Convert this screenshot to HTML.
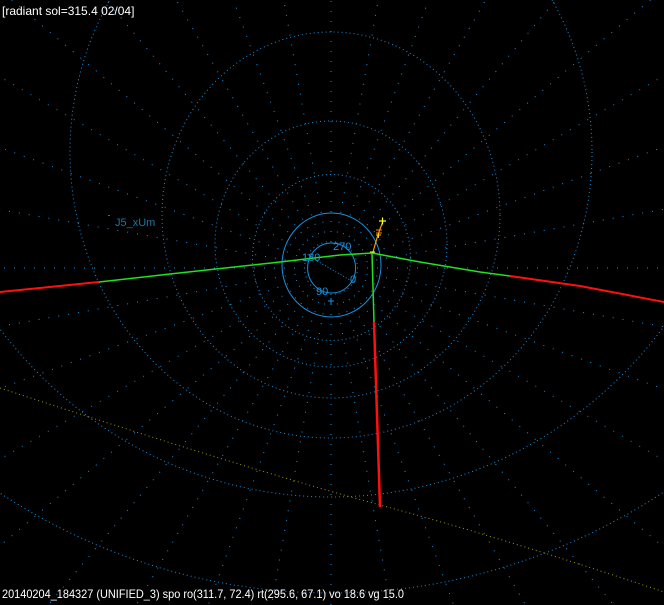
<!DOCTYPE html>
<html><head><meta charset="utf-8"><style>
html,body{margin:0;padding:0;background:#000;width:664px;height:605px;overflow:hidden}
svg{display:block;position:absolute;left:0;top:0}
</style></head><body>
<svg width="664" height="605" viewBox="0 0 664 605" xmlns="http://www.w3.org/2000/svg">
<rect width="664" height="605" fill="#000"/>
<g fill="none" stroke="#1a90e0" stroke-width="1">
<ellipse cx="331.6" cy="268" rx="24" ry="25"/>
<ellipse cx="331.5" cy="265" rx="49.5" ry="52"/>
</g>
<g fill="none" stroke="#1a90e0" stroke-width="1" stroke-dasharray="1 3">
<ellipse cx="331.5" cy="257.5" rx="79" ry="83"/>
<ellipse cx="331" cy="244" rx="116" ry="123"/>
<ellipse cx="331" cy="215" rx="169" ry="183"/>
<ellipse cx="331" cy="152" rx="261" ry="286"/>
<ellipse cx="331" cy="60" rx="420" ry="437"/>
<ellipse cx="331" cy="-100" rx="640" ry="693"/>
</g>
<g transform="translate(331,268)" stroke="#1a90e0" stroke-width="1" stroke-dasharray="1 9">
<line x1="26" y1="0" x2="700" y2="0" transform="rotate(0)"/>
<line x1="26" y1="0" x2="700" y2="0" transform="rotate(10)"/>
<line x1="26" y1="0" x2="700" y2="0" transform="rotate(20)"/>
<line x1="26" y1="0" x2="700" y2="0" transform="rotate(30)"/>
<line x1="26" y1="0" x2="700" y2="0" transform="rotate(40)"/>
<line x1="26" y1="0" x2="700" y2="0" transform="rotate(50)"/>
<line x1="26" y1="0" x2="700" y2="0" transform="rotate(60)"/>
<line x1="26" y1="0" x2="700" y2="0" transform="rotate(70)"/>
<line x1="26" y1="0" x2="700" y2="0" transform="rotate(80)"/>
<line x1="26" y1="0" x2="700" y2="0" transform="rotate(90)"/>
<line x1="26" y1="0" x2="700" y2="0" transform="rotate(100)"/>
<line x1="26" y1="0" x2="700" y2="0" transform="rotate(110)"/>
<line x1="26" y1="0" x2="700" y2="0" transform="rotate(120)"/>
<line x1="26" y1="0" x2="700" y2="0" transform="rotate(130)"/>
<line x1="26" y1="0" x2="700" y2="0" transform="rotate(140)"/>
<line x1="26" y1="0" x2="700" y2="0" transform="rotate(150)"/>
<line x1="26" y1="0" x2="700" y2="0" transform="rotate(160)"/>
<line x1="26" y1="0" x2="700" y2="0" transform="rotate(170)"/>
<line x1="26" y1="0" x2="700" y2="0" transform="rotate(180)"/>
<line x1="26" y1="0" x2="700" y2="0" transform="rotate(190)"/>
<line x1="26" y1="0" x2="700" y2="0" transform="rotate(200)"/>
<line x1="26" y1="0" x2="700" y2="0" transform="rotate(210)"/>
<line x1="26" y1="0" x2="700" y2="0" transform="rotate(220)"/>
<line x1="26" y1="0" x2="700" y2="0" transform="rotate(230)"/>
<line x1="26" y1="0" x2="700" y2="0" transform="rotate(240)"/>
<line x1="26" y1="0" x2="700" y2="0" transform="rotate(250)"/>
<line x1="26" y1="0" x2="700" y2="0" transform="rotate(260)"/>
<line x1="26" y1="0" x2="700" y2="0" transform="rotate(270)"/>
<line x1="26" y1="0" x2="700" y2="0" transform="rotate(280)"/>
<line x1="26" y1="0" x2="700" y2="0" transform="rotate(290)"/>
<line x1="26" y1="0" x2="700" y2="0" transform="rotate(300)"/>
<line x1="26" y1="0" x2="700" y2="0" transform="rotate(310)"/>
<line x1="26" y1="0" x2="700" y2="0" transform="rotate(320)"/>
<line x1="26" y1="0" x2="700" y2="0" transform="rotate(330)"/>
<line x1="26" y1="0" x2="700" y2="0" transform="rotate(340)"/>
<line x1="26" y1="0" x2="700" y2="0" transform="rotate(350)"/>
</g>
<line x1="312" y1="258" x2="350" y2="280" stroke="#1a90e0" stroke-dasharray="1 2"/>
<path d="M0,388 Q250,470 380,505 T664,592" fill="none" stroke="#9a9a00" stroke-width="1" stroke-dasharray="1 3"/>
<polyline points="0,292 99,282" fill="none" stroke="#ff1010" stroke-width="2"/>
<polyline points="99,282 170,274 280,262 340,255 372,253 420,262 480,272 510,276" fill="none" stroke="#20e020" stroke-width="1.5"/>
<polyline points="510,276 580,286 664,302" fill="none" stroke="#ff1010" stroke-width="2"/>
<line x1="372" y1="253" x2="374" y2="322" stroke="#20e020" stroke-width="1.5"/>
<line x1="374" y1="322" x2="380" y2="507" stroke="#ff1010" stroke-width="2.5"/>
<polyline points="373,252 377,238 380,229 383,221" fill="none" stroke="#ff9a00" stroke-width="1.2"/>
<g stroke="#ffff20" stroke-width="1.2"><line x1="379" y1="221" x2="386" y2="221"/><line x1="382.5" y1="217.5" x2="382.5" y2="224.5"/></g>
<g stroke="#ff8000" stroke-width="1"><line x1="376" y1="230" x2="382" y2="230"/><line x1="376" y1="233" x2="382" y2="233"/></g>
<g stroke="#ffd000" stroke-width="1"><line x1="376" y1="235" x2="381" y2="235"/><line x1="378.5" y1="233" x2="378.5" y2="238"/></g>
<g stroke="#ffff40" stroke-width="1"><line x1="370" y1="252" x2="375" y2="252"/></g>
<g stroke="#1a90e0"><line x1="328" y1="301" x2="334" y2="301"/><line x1="331" y1="298" x2="331" y2="304"/></g>
<g font-family="'Liberation Sans', sans-serif" font-size="11" fill="#1a90e0">
<text x="333" y="250">270</text>
<text x="302" y="261">180</text>
<text x="350" y="283">0</text>
<text x="316" y="295">90</text>
</g>
<text x="115" y="226" font-family="'Liberation Sans', sans-serif" font-size="11" fill="#1478a8">J5_xUm</text>
<rect x="108" y="215" width="2" height="1" fill="#1478a8"/>
<text x="2" y="15" font-family="'Liberation Sans', sans-serif" font-size="12" fill="#fff">[radiant sol=315.4 02/04]</text>
<text x="2" y="598" font-family="'Liberation Sans', sans-serif" font-size="12" fill="#fff" textLength="402" lengthAdjust="spacingAndGlyphs">20140204_184327 (UNIFIED_3) spo ro(311.7, 72.4) rt(295.6, 67.1) vo 18.6 vg 15.0</text>
</svg>
</body></html>
